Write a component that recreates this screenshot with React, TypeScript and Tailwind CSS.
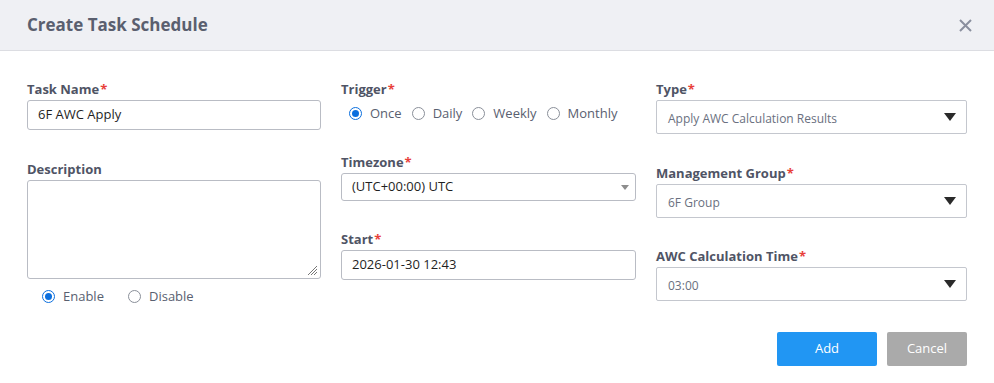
import React from 'react';

const font = { fontFamily: '"Open Sans", "Noto Sans", sans-serif' };

function Label({ text, required = true }: { text: string; required?: boolean }) {
  return (
    <div className="h-[18px] text-[13px] leading-[18px] font-bold text-[#4f5465]">
      {text}
      {required && <span className="ml-[1px] text-[#e8403a]">*</span>}
    </div>
  );
}

function Radio({ label, checked = false }: { label: string; checked?: boolean }) {
  return (
    <div className="flex items-center gap-[8px]">
      <span
        className={
          checked
            ? 'flex h-[13px] w-[13px] items-center justify-center rounded-full border-[1.5px] border-[#0b6fde] bg-white'
            : 'h-[13px] w-[13px] rounded-full border border-[#8a8f99] bg-white'
        }
      >
        {checked && <span className="h-[7px] w-[7px] rounded-full bg-[#0b6fde]" />}
      </span>
      <span className="text-[13px] leading-[18px] text-[#596070]">{label}</span>
    </div>
  );
}

function Select({ value }: { value: string }) {
  return (
    <div className="flex h-[34px] items-center justify-between rounded-[2px] border border-[#c4c7ce] bg-white pl-[11px] pr-[10px]">
      <span className="pt-[4px] text-[12px] text-[#6a7080]">{value}</span>
      <svg width="12" height="8" viewBox="0 0 12 8">
        <path d="M0 0 H12 L6 8 Z" fill="#2a2a2a" />
      </svg>
    </div>
  );
}

export default function App() {
  return (
    <div style={font} className="h-[383px] w-[994px] bg-white">
      <div className="flex h-[51px] items-center justify-between border-b border-[#dcdde2] bg-[#eff0f4] pl-[27px] pr-[22px]">
        <h2 className="text-[17px] font-bold text-[#5a5f6f]">Create Task Schedule</h2>
        <svg width="13" height="13" viewBox="0 0 13 13">
          <path d="M1 1 L12 12 M12 1 L1 12" stroke="#8a8f9e" strokeWidth="2" />
        </svg>
      </div>

      <div className="grid grid-cols-[294px_295px_311px] gap-x-[20px] px-[27px] pt-[29px]">
        {/* left column */}
        <div className="flex flex-col">
          <Label text="Task Name" />
          <div className="mt-[2px] flex h-[30px] items-center rounded-[3px] border border-[#b9bcc4] px-[10px] text-[13px] text-[#1f1f1f]">
            6F AWC Apply
          </div>
          <div className="mt-[30px]">
            <Label text="Description" required={false} />
          </div>
          <div className="relative mt-[2px] h-[99px] rounded-[3px] border border-[#b9bcc4]">
            <svg className="absolute bottom-[2px] right-[2px]" width="12" height="12" viewBox="0 0 12 12">
              <path d="M11 2 L2 11 M11 5 L5 11 M11 8 L8 11" stroke="#777" strokeWidth="1" />
            </svg>
          </div>
          <div className="mt-[8px] flex gap-[24px] pl-[15px]">
            <Radio label="Enable" checked />
            <Radio label="Disable" />
          </div>
        </div>

        {/* middle column */}
        <div className="flex flex-col">
          <Label text="Trigger" />
          <div className="mt-[6px] flex gap-[10px] pl-[8px]">
            <Radio label="Once" checked />
            <Radio label="Daily" />
            <Radio label="Weekly" />
            <Radio label="Monthly" />
          </div>
          <div className="mt-[31px]">
            <Label text="Timezone" />
          </div>
          <div className="mt-[2px] flex h-[28px] items-center justify-between rounded-[3px] border border-[#b9bcc4] pl-[10px] pr-[6px]">
            <span className="text-[13px] text-[#1f1f1f]">(UTC+00:00) UTC</span>
            <svg width="8" height="5" viewBox="0 0 8 5">
              <path d="M0 0 H8 L4 5 Z" fill="#8d8d8d" />
            </svg>
          </div>
          <div className="mt-[29px]">
            <Label text="Start" />
          </div>
          <div className="mt-[2px] flex h-[30px] items-center rounded-[3px] border border-[#b9bcc4] px-[10px] text-[13px] text-[#1f1f1f]">
            2026-01-30 12:43
          </div>
        </div>

        {/* right column */}
        <div className="flex flex-col">
          <Label text="Type" />
          <div className="mt-[2px]">
            <Select value="Apply AWC Calculation Results" />
          </div>
          <div className="mt-[30px]">
            <Label text="Management Group" />
          </div>
          <div className="mt-[2px]">
            <Select value="6F Group" />
          </div>
          <div className="mt-[29px]">
            <Label text="AWC Calculation Time" />
          </div>
          <div className="mt-[2px]">
            <Select value="03:00" />
          </div>
        </div>
      </div>

      <div className="mt-[27px] flex justify-end gap-[10px] pr-[27px]">
        <button className="h-[34px] w-[100px] rounded-[2px] bg-[#2196f3] text-[13px] text-white">Add</button>
        <button className="h-[34px] w-[80px] rounded-[2px] bg-[#aaaaaa] text-[13px] text-white">Cancel</button>
      </div>
    </div>
  );
}
